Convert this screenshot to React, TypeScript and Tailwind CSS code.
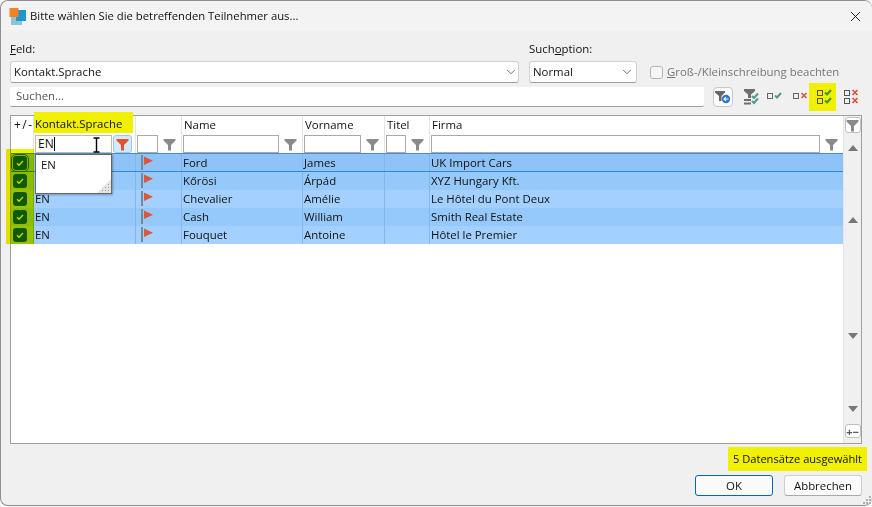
import { ChevronDown, X } from "lucide-react"

const cols = "grid grid-cols-[22px_102px_46px_121px_82px_45px_1fr]"

const rows = [
  { lang: "", name: "Ford", first: "James", company: "UK Import Cars" },
  { lang: "", name: "Kőrösi", first: "Árpád", company: "XYZ Hungary Kft." },
  { lang: "EN", name: "Chevalier", first: "Amélie", company: "Le Hôtel du Pont Deux" },
  { lang: "EN", name: "Cash", first: "William", company: "Smith Real Estate" },
  { lang: "EN", name: "Fouquet", first: "Antoine", company: "Hôtel le Premier" },
]

function Funnel({ color = "#8a8a8a" }: { color?: string }) {
  return (
    <svg width="13" height="13" viewBox="0 0 13 13" className="shrink-0">
      <path d="M0.5 1h12v1.5L8 7v5.5H5V7L0.5 2.5z" fill={color} />
    </svg>
  )
}

function Flag() {
  return (
    <svg width="14" height="16" viewBox="0 0 14 16" className="mt-[1px]">
      <rect x="1" y="0" width="2" height="15" fill="#7d8794" />
      <path d="M4 1.5l9 4.2-9 4.2z" fill="#d9583b" />
    </svg>
  )
}

function Check({ focused }: { focused?: boolean }) {
  return (
    <div
      className={`flex h-[14px] w-[14px] items-center justify-center rounded-[3px] bg-[#0f5f10] ${
        focused ? "outline outline-offset-1 outline-[#1f6b1f]" : ""
      }`}
    >
      <svg width="10" height="10" viewBox="0 0 10 10" fill="none" stroke="#d8e8b8" strokeWidth="1.3">
        <path d="M2 5.2l2 2 4-4.2" />
      </svg>
    </div>
  )
}

function BoxMark({ kind, color, dbl }: { kind: "check" | "x"; color: string; dbl?: boolean }) {
  const mark = (y: number) =>
    kind === "check" ? (
      <path d={`M10 ${y + 3.5}l2 2 4-4.5`} stroke={color} strokeWidth="2" fill="none" />
    ) : (
      <path d={`M10.5 ${y + 1}l5 5m0-5l-5 5`} stroke={color} strokeWidth="1.7" fill="none" />
    )
  return (
    <svg width="18" height="18" viewBox="0 0 18 18" className="shrink-0">
      {dbl ? (
        <>
          <rect x="2.5" y="2.5" width="5" height="5" fill="none" stroke="#555" />
          <rect x="2.5" y="10.5" width="5" height="5" fill="none" stroke="#555" />
          {mark(1)}
          {mark(9)}
        </>
      ) : (
        <>
          <rect x="2.5" y="6.5" width="5" height="5" fill="none" stroke="#666" />
          {mark(5)}
        </>
      )}
    </svg>
  )
}

function FilterCell({ width }: { width: string }) {
  return (
    <div className="flex h-[18px] items-center pl-[1px]">
      <div className={`h-[18px] ${width} border border-[#a9a9a9] bg-white`} />
      <div className="flex flex-1 justify-center">
        <Funnel />
      </div>
    </div>
  )
}

export default function App() {
  return (
    <div className="h-[507px] w-[872px] overflow-hidden bg-[#f4f4f4] font-['Open_Sans',sans-serif] text-[11.4px] text-[#111]">
      <div className="relative flex h-[506px] w-[872px] flex-col rounded-lg border border-[#8f8f8f] border-r-0 bg-[#f0f0f0]">
        {/* title bar */}
        <div className="flex h-[30px] shrink-0 items-center rounded-t-lg bg-[#f3f3f3] pl-[8px] pr-[8px]">
          <svg width="17" height="17" viewBox="0 0 17 17" className="mr-[4px]">
            <rect x="2" y="7" width="11" height="10" fill="#8cc4d8" />
            <rect x="7" y="2" width="10" height="11" fill="#1f96d2" />
            <rect x="0.5" y="0" width="9" height="9" fill="#f58220" />
          </svg>
          <span className="flex-1 text-[11.3px]">Bitte wählen Sie die betreffenden Teilnehmer aus...</span>
          <X size={17} strokeWidth={1.3} />
        </div>

        <div className="flex flex-1 flex-col pl-[9px] pr-[9px]">
          {/* search fields */}
          <div className="mt-[7px] flex">
            <div className="w-[509px]">
              <div className="h-[23px] leading-[22px]">
                <u>F</u>eld:
              </div>
              <div className="flex h-[22px] items-center justify-between rounded-[3px] border border-[#d0d0d0] border-b-[#a0a0a0] bg-white pl-[3px] pr-0">
                <span>Kontakt.Sprache</span>
                <ChevronDown size={14} strokeWidth={1.2} className="text-[#333]" />
              </div>
            </div>
            <div className="ml-[10px] w-[108px]">
              <div className="h-[23px] leading-[22px]">
                Such<u>o</u>ption:
              </div>
              <div className="flex h-[22px] items-center justify-between rounded-[3px] border border-[#d0d0d0] border-b-[#a0a0a0] bg-white pl-[3px] pr-[2px]">
                <span>Normal</span>
                <ChevronDown size={14} strokeWidth={1.2} className="text-[#333]" />
              </div>
            </div>
            <div className="ml-[13px] mt-[23px] flex h-[22px] items-center text-[#777]">
              <div className="mr-[4px] h-[13px] w-[13px] rounded-[3px] border border-[#b5b5b5] bg-[#f6f6f6]" />
              <span>
                <u>G</u>roß-/Kleinschreibung beachten
              </span>
            </div>
          </div>

          {/* search box + toolbar */}
          <div className="mt-[3px] flex h-[21px] items-center">
            <div className="flex h-[20px] w-[694px] shrink-0 items-center rounded-[2px] border-b border-[#a0a0a0] bg-white pl-[6px] text-[#555]">
              Suchen...
            </div>
            <div className="ml-[9px] flex h-[20px] w-[20px] shrink-0 items-center justify-center rounded-[4px] border border-[#c8c8c8] bg-[#fbfbfb]">
              <svg width="16" height="14" viewBox="0 0 16 14">
                <path d="M0 1h10v1.5L6.5 6v5H4V6L0 2.5z" fill="#666" />
                <circle cx="11" cy="9" r="4.2" fill="#2b78c2" />
                <path d="M13.5 9H9m1.8-1.8L9 9l1.8 1.8" stroke="#fff" strokeWidth="1.1" fill="none" />
              </svg>
            </div>
            <div className="ml-[9px] flex items-center">
              <svg width="18" height="18" viewBox="0 0 18 18" className="shrink-0">
                <path d="M2 1h11v2L9 6.5V10H6V6.5L2 3z" fill="#6e6e6e" />
                <rect x="2" y="11" width="7" height="2" fill="#6e6e6e" />
                <rect x="2" y="14.5" width="7" height="2" fill="#6e6e6e" />
                <path d="M10 8l2 2 4-4.5M10 13l2 2 4-4.5" stroke="#4f9a8c" strokeWidth="2" fill="none" />
              </svg>
              <div className="ml-[5px] mt-[-2px]">
                <BoxMark kind="check" color="#4f9a8c" />
              </div>
              <div className="ml-[8px] mt-[-2px]">
                <BoxMark kind="x" color="#d9583b" />
              </div>
              <div className="flex h-[28px] w-[27px] shrink-0 items-center justify-center bg-[#f0f000] pl-[2px]">
                <BoxMark kind="check" color="#3f9a10" dbl />
              </div>
              <div className="ml-[6px]">
                <BoxMark kind="x" color="#d9583b" dbl />
              </div>
            </div>
          </div>

          {/* grid */}
          <div className="relative mt-[8px] flex h-[329px] w-[852px] border border-[#a0a0a0] bg-white">
            <div className="w-[832px]">
              <div className={`${cols} h-[38px] border-b border-[#3d8fd8]`}>
                <div className="pl-[3px] pt-[1px] text-[12px] leading-[16px] tracking-[1.5px]">+/-</div>
                <div className="border-l border-[#e4e4e4]" />
                <div className="border-l border-[#e4e4e4] pt-[19px]">
                  <FilterCell width="w-[21px]" />
                </div>
                <div className="border-l border-[#e4e4e4]">
                  <div className="h-[19px] pl-[2px] pt-[1px] leading-[16px]">Name</div>
                  <FilterCell width="w-[96px]" />
                </div>
                <div className="border-l border-[#e4e4e4]">
                  <div className="h-[19px] pl-[2px] pt-[1px] leading-[16px]">Vorname</div>
                  <FilterCell width="w-[57px]" />
                </div>
                <div className="border-l border-[#e4e4e4]">
                  <div className="h-[19px] pl-[2px] pt-[1px] leading-[16px]">Titel</div>
                  <FilterCell width="w-[20px]" />
                </div>
                <div className="border-l border-[#e4e4e4]">
                  <div className="h-[19px] pl-[2px] pt-[1px] leading-[16px]">Firma</div>
                  <FilterCell width="w-[389px]" />
                </div>
              </div>
              {rows.map((r, i) => (
                <div
                  key={r.name}
                  className={`${cols} h-[18px] items-center leading-[17px] ${
                    i === 0 ? "border-b border-[#2f86d8] bg-[#8fc3f7]" : i % 2 ? "bg-[#96c9fb]" : "bg-[#a3d0ff]"
                  }`}
                >
                  <div className="flex pl-[2px]">
                    <Check focused={i === 0} />
                  </div>
                  <div className="h-full border-l border-[#86b6e6] pl-[1px]">{r.lang}</div>
                  <div className="flex h-full items-start border-l border-[#86b6e6] pl-[4px]">
                    <Flag />
                  </div>
                  <div className="h-full border-l border-[#86b6e6] pl-[1px]">{r.name}</div>
                  <div className="h-full border-l border-[#86b6e6] pl-[1px]">{r.first}</div>
                  <div className="h-full border-l border-[#86b6e6]" />
                  <div className="h-full border-l border-[#86b6e6] pl-[1px]">{r.company}</div>
                </div>
              ))}
            </div>

            {/* right scrollbar */}
            <div className="flex w-[18px] flex-col items-center border-l border-[#e4e4e4] bg-[#f0f0f0]">
              <div className="mt-[1px] flex h-[16px] w-[16px] items-center justify-center rounded-[3px] border border-[#c0c0c0] bg-white">
                <Funnel />
              </div>
              <div className="mt-[12px] h-0 w-0 border-x-[5px] border-b-[6px] border-x-transparent border-b-[#777]" />
              <div className="mt-[66px] h-0 w-0 border-x-[5px] border-b-[6px] border-x-transparent border-b-[#777]" />
              <div className="mt-[110px] h-0 w-0 border-x-[5px] border-t-[6px] border-x-transparent border-t-[#777]" />
              <div className="mt-[67px] h-0 w-0 border-x-[5px] border-t-[6px] border-x-transparent border-t-[#777]" />
              <div className="mt-[12px] flex h-[14px] w-[16px] items-center justify-center rounded-[3px] border border-[#c0c0c0] bg-white text-[11px] font-bold leading-none text-[#555]">
                +−
              </div>
            </div>

            {/* yellow markers */}
            <div className="absolute left-[23px] top-[-4px] h-[21px] w-[99px] bg-[#f0f000] pl-[1px] pt-[4px] leading-[16px]">
              Kontakt.Sprache
            </div>
            <div className="absolute left-[-5px] top-[33px] h-[95px] w-[28px] bg-[#f0f000] mix-blend-multiply" />

            {/* open filter on Kontakt.Sprache */}
            <div className="absolute left-[24px] top-[19px] flex h-[18px] w-[98px] items-center">
              <div className="flex h-[18px] w-[77px] items-center border border-[#c0c0a0] bg-white pl-[2px] text-[12px]">
                EN<span className="h-[14px] w-px bg-black" />
              </div>
              <div className="ml-[1px] flex h-[18px] w-[19px] shrink-0 items-center justify-center rounded-[3px] border border-[#9cc8f0] bg-[#d6e9fb]">
                <Funnel color="#e0532f" />
              </div>
            </div>
            <svg width="9" height="16" viewBox="0 0 9 16" className="absolute left-[81px] top-[21px]">
              <path d="M1.5 1h6M1.5 15h6M4.5 1v14" stroke="#000" strokeWidth="1.4" fill="none" />
            </svg>
            <div className="absolute left-[24px] top-[38px] h-[40px] w-[77px] border border-[#666] bg-white pl-[5px] leading-[20px] shadow-[1px_1px_2px_rgba(0,0,0,0.3)]">
              EN
              <svg width="14" height="14" viewBox="0 0 14 14" className="absolute bottom-0 right-0">
                <path d="M14 0L0 14h14z" fill="#e4e4e4" />
                <path d="M11 5h1v1h-1zM8 8h1v1H8zM11 8h1v1h-1zM5 11h1v1H5zM8 11h1v1H8zM11 11h1v1h-1z" fill="#999" />
              </svg>
            </div>
          </div>

          {/* footer */}
          <div className="mr-[-4px] mt-[3px] flex justify-end">
            <div className="flex h-[24px] w-[139px] items-center justify-center whitespace-nowrap bg-[#f0f000] text-[11.1px]">
              5 Datensätze ausgewählt
            </div>
          </div>
          <div className="mt-[4px] flex justify-end pr-[1px]">
            <button className="h-[21px] w-[78px] rounded-[3px] border border-[#0067c0] bg-[#fbfbfb] leading-[18px]">OK</button>
            <button className="ml-[11px] h-[21px] w-[78px] rounded-[3px] border border-[#cfcfcf] border-b-[#a8a8a8] bg-[#fbfbfb] leading-[18px]">
              Abbrechen
            </button>
          </div>
        </div>

        {/* resize grip */}
        <svg width="8" height="8" viewBox="0 0 8 8" className="absolute bottom-[1px] right-[1px]">
          <path d="M6 0h2v2H6zM3 3h2v2H3zM6 3h2v2H6zM0 6h2v2H0zM3 6h2v2H3zM6 6h2v2H6z" fill="#b0b0b0" />
        </svg>
      </div>
    </div>
  )
}
